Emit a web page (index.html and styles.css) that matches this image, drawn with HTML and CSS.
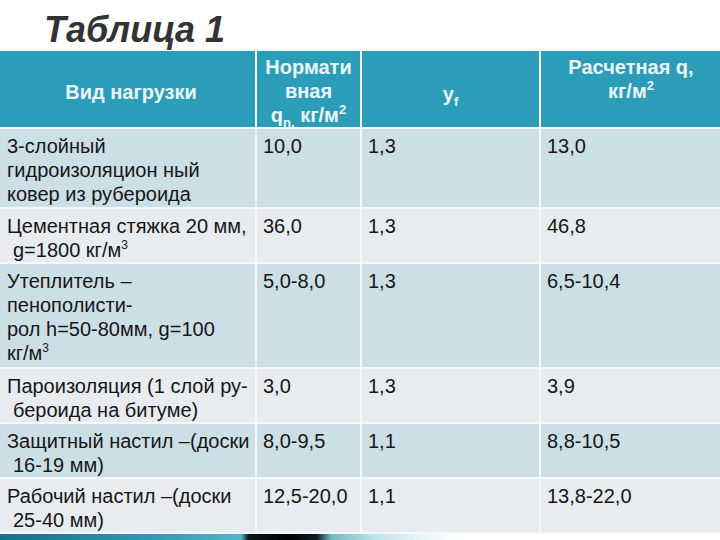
FILE: index.html
```html
<!DOCTYPE html>
<html>
<head>
<meta charset="utf-8">
<link rel="stylesheet" href="styles.css">
</head>
<body>
<div class="page">
  <h1 class="title">Таблица 1</h1>
  <table class="loads">
    <colgroup>
      <col class="c1"><col class="c2"><col class="c3"><col class="c4">
    </colgroup>
    <thead>
      <tr class="head">
        <th class="mid">Вид нагрузки</th>
        <th class="top">Нормати<br>вная<br>q<sub>n,</sub> кг/м<sup>2</sup></th>
        <th class="mid gam">y<sub>f</sub></th>
        <th class="top">Расчетная q,<br>кг/м<sup>2</sup></th>
      </tr>
    </thead>
    <tbody>
      <tr class="odd r1">
        <td>3-слойный<br>гидроизоляцион ный<br>ковер из рубероида</td>
        <td>10,0</td><td>1,3</td><td>13,0</td>
      </tr>
      <tr class="even r2">
        <td>Цементная стяжка 20 мм,<br><span class="ind">g=1800 кг/м<sup>3</sup></span></td>
        <td>36,0</td><td>1,3</td><td>46,8</td>
      </tr>
      <tr class="odd r3">
        <td>Утеплитель –<br>пенополисти-<br>рол h=50-80мм, g=100<br>кг/м<sup>3</sup></td>
        <td>5,0-8,0</td><td>1,3</td><td>6,5-10,4</td>
      </tr>
      <tr class="even r4">
        <td>Пароизоляция (1 слой ру-<br><span class="ind">бероида на битуме)</span></td>
        <td>3,0</td><td>1,3</td><td>3,9</td>
      </tr>
      <tr class="odd r5">
        <td>Защитный настил –(доски<br><span class="ind">16-19 мм)</span></td>
        <td>8,0-9,5</td><td>1,1</td><td>8,8-10,5</td>
      </tr>
      <tr class="even r6">
        <td>Рабочий настил –(доски<br><span class="ind">25-40 мм)</span></td>
        <td>12,5-20,0</td><td>1,1</td><td>13,8-22,0</td>
      </tr>
    </tbody>
  </table>
  <div class="strip"></div>
</div>
</body>
</html>
```
FILE: styles.css
```css
html, body {
  margin: 0;
  padding: 0;
  background: #ffffff;
}
.page {
  width: 720px;
  height: 540px;
  overflow: hidden;
  font-family: "Liberation Sans", Arial, sans-serif;
}
.title {
  margin: 0;
  padding: 10px 0 0 44px;
  height: 39px;
  font-size: 36px;
  line-height: 40px;
  font-weight: bold;
  font-style: italic;
  color: #333333;
}
.loads {
  border-collapse: collapse;
  table-layout: fixed;
  width: 722px;
  border-top: 2px solid #e4eef2;
}
.c1 { width: 256px; }
.c2 { width: 105px; }
.c3 { width: 179px; }
.c4 { width: 182px; }
.loads th, .loads td {
  box-sizing: border-box;
  border: 2px solid #f4f8fa;
  padding: 5px 2px 0 6px;
  text-align: left;
  vertical-align: top;
  white-space: nowrap;
}
.loads tr > :first-child { border-left: none; padding-left: 7px; }
.head th {
  background: #2c9db9;
  color: #e9f6f9;
  font-size: 20px;
  line-height: 24px;
  font-weight: bold;
  text-align: center;
  height: 78px;
  padding: 4px 0 0 0;
}
.head th.mid { vertical-align: middle; padding-top: 6px; }
.head th.gam { padding-top: 10px; }
sub, sup {
  font-size: 13px;
  line-height: 0;
}
sup { vertical-align: 8px; }
sub { vertical-align: -5px; }
.loads td {
  font-size: 20px;
  line-height: 24px;
  color: #161616;
}
.loads td sup { font-size: 12px; vertical-align: 8px; }
.odd td { background: #cddfe6; }
.even td { background: #e8ecf0; }
.ind { padding-left: 6px; }
.r1 td { height: 80px; }
.r2 td { height: 54px; }
.r3 td { height: 105px; }
.r4 td { height: 55px; }
.r5 td { height: 55px; }
.r6 td { height: 55px; }
.strip {
  height: 8px;
  background: linear-gradient(90deg, #176f87 0%, #2f98b2 20%, #55b4c9 33.5%, #0a1a1f 34.5%, #000000 40%, #0c1f24 44%, #6fb9c9 46%, #bfe3eb 52%, #e6f4f7 58%, #ffffff 64%);
}
```
